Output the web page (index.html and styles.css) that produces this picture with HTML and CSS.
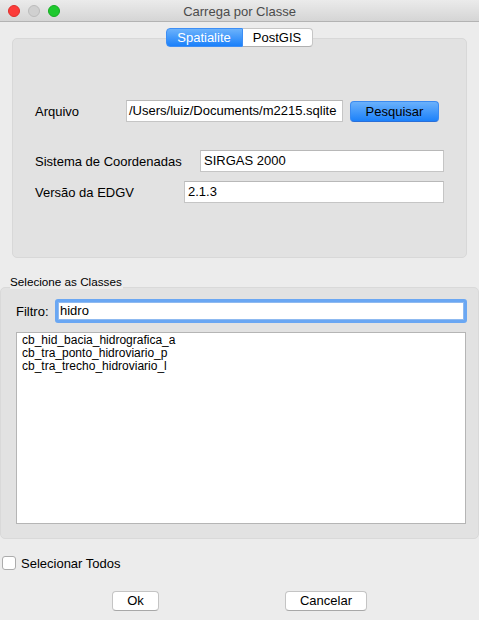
FILE: index.html
```html
<!DOCTYPE html>
<html lang="pt">
<head>
<meta charset="utf-8">
<title>Carrega por Classe</title>
<link rel="stylesheet" href="styles.css">
</head>
<body>
<div class="window">
  <div class="titlebar">
    <div class="lights">
      <span class="light red"></span>
      <span class="light grey"></span>
      <span class="light green"></span>
    </div>
    <div class="title">Carrega por Classe</div>
    <div></div>
  </div>

  <div class="tabs">
    <div class="tab active">Spatialite</div>
    <div class="tab">PostGIS</div>
  </div>

  <div class="panel">
    <div class="row">
      <span class="label lbl-arquivo">Arquivo</span>
      <div class="field f-arquivo">/Users/luiz/Documents/m2215.sqlite</div>
      <div class="btn-blue">Pesquisar</div>
    </div>
    <div class="row row-sistema">
      <span class="label lbl-sistema">Sistema de Coordenadas</span>
      <div class="field f-sistema">SIRGAS 2000</div>
    </div>
    <div class="row row-versao">
      <span class="label lbl-versao">Versão da EDGV</span>
      <div class="field f-versao">2.1.3</div>
    </div>
  </div>

  <div class="group-title"><span>Selecione as Classes</span></div>
  <div class="group">
    <div class="filter-row">
      <span class="filter-label">Filtro:</span>
      <div class="filter-input">hidro</div>
    </div>
    <div class="list">
      <div class="item">cb_hid_bacia_hidrografica_a</div>
      <div class="item">cb_tra_ponto_hidroviario_p</div>
      <div class="item">cb_tra_trecho_hidroviario_l</div>
    </div>
  </div>

  <div class="check-row">
    <span class="checkbox"></span>
    <span class="check-label">Selecionar Todos</span>
  </div>

  <div class="buttons">
    <div class="btn btn-ok">Ok</div>
    <div class="btn btn-cancel">Cancelar</div>
  </div>
</div>
</body>
</html>
```

FILE: styles.css
```css
* { box-sizing: border-box; }

html, body {
  margin: 0;
  padding: 0;
  background: #ececec;
}

.window {
  width: 479px;
  height: 620px;
  background: #ececec;
  font-family: "Liberation Sans", Arial, Helvetica, sans-serif;
  font-size: 13px;
  color: #000;
  overflow: hidden;
}

/* Title bar */
.titlebar {
  height: 22px;
  display: grid;
  grid-template-columns: 1fr auto 1fr;
  align-items: center;
  background: linear-gradient(#ebebeb, #d5d5d5);
  border-bottom: 1px solid #b3b3b3;
}

.lights {
  display: flex;
  gap: 8px;
  padding-left: 8px;
  padding-top: 1px;
}

.light {
  width: 12px;
  height: 12px;
  border-radius: 50%;
  display: block;
}

.light.red { background: #fc3c3a; border: 1px solid #de2f2b; }
.light.grey { background: #d0d0d0; border: 1px solid #bcbcbc; }
.light.green { background: #1ec92e; border: 1px solid #15ac22; }

.title {
  color: #4b4b4b;
  font-size: 13px;
  padding-top: 1px;
}

/* Tabs */
.tabs {
  display: flex;
  justify-content: center;
  margin-top: 6px;
  margin-bottom: -9px;
  position: relative;
  z-index: 1;
  padding-right: 1px;
}

.tab {
  height: 19px;
  line-height: 18px;
  text-align: center;
  font-size: 13px;
  background: #fff;
  border: 1px solid #c6c6c6;
  border-bottom-color: #b0b0b0;
}

.tab.active {
  width: 77px;
  color: #fff;
  background: linear-gradient(#6cb2fb, #1a80fa);
  border-color: #3d8ef5;
  border-radius: 4px 0 0 4px;
}

.tab:not(.active) {
  width: 70px;
  border-left: none;
  border-radius: 0 4px 4px 0;
}

/* Tab panel */
.panel {
  margin: 0 12px;
  height: 220px;
  background: #e2e2e2;
  border: 1px solid #d8d8d8;
  border-radius: 5px;
  padding: 61px 0 0 22px;
}

.row {
  display: flex;
  align-items: center;
  height: 22px;
}

.row-sistema { margin-top: 28px; }
.row-versao { margin-top: 9px; }

.label { flex: none; }
.lbl-arquivo { width: 91px; }
.lbl-sistema { width: 165px; }
.lbl-versao { width: 149px; }

.field {
  height: 22px;
  background: #fff;
  border: 1px solid #c5c5c5;
  border-top-color: #b8b8b8;
  padding: 0 0 0 3px;
  line-height: 20px;
  white-space: nowrap;
  overflow: hidden;
}

.f-arquivo { width: 217px; padding-left: 2px; }
.f-sistema { width: 244px; }
.f-versao { width: 260px; }

.btn-blue {
  margin-left: 7px;
  width: 89px;
  height: 21px;
  line-height: 19px;
  text-align: center;
  border-radius: 4px;
  background: linear-gradient(#6ab1fb, #1c81fa);
  border: 1px solid #3a8af0;
  border-bottom-color: #2a6fd8;
  margin-top: 1px;
}

/* Group */
.group-title {
  margin-top: 17px;
  margin-bottom: -3px;
  padding-left: 10px;
  position: relative;
  z-index: 1;
  height: 15px;
  line-height: 14px;
}

.group-title span {
  display: inline-block;
  font-size: 11.7px;
  background: #ececec;
  padding-right: 1px;
  height: 14px;
}

.group {
  height: 252px;
  background: #e2e2e2;
  border: 1px solid #d9d9d9;
  border-radius: 5px;
  padding: 11px 0 0 15px;
}

.filter-row {
  display: flex;
  align-items: center;
  height: 24px;
}

.filter-label {
  width: 39px;
  flex: none;
}

.filter-input {
  width: 412px;
  height: 24px;
  background: #fff;
  border: 3px solid #6aa7f3;
  border-radius: 3px;
  box-shadow: inset 0 0 0 1px #8fbaf0;
  padding-left: 2px;
  line-height: 18px;
}

.list {
  margin-top: 9px;
  width: 450px;
  height: 192px;
  background: #fff;
  border: 1px solid #b5b5b5;
  padding: 1px 0 0 5px;
  font-size: 12px;
  line-height: 13px;
}

/* Checkbox */
.check-row {
  display: flex;
  align-items: center;
  margin-top: 17px;
  padding-left: 2px;
  height: 14px;
}

.checkbox {
  width: 14px;
  height: 14px;
  background: #fff;
  border: 1px solid #acacac;
  border-radius: 3px;
  flex: none;
}

.check-label {
  margin-left: 5px;
}

/* Buttons */
.buttons {
  display: flex;
  margin-top: 21px;
  padding-left: 112px;
}

.btn {
  height: 20px;
  line-height: 18px;
  text-align: center;
  background: #fff;
  border: 1px solid #c4c4c4;
  border-bottom-color: #a8a8a8;
  border-radius: 4px;
}

.btn-ok { width: 47px; }
.btn-cancel { width: 82px; margin-left: 126px; }
```
